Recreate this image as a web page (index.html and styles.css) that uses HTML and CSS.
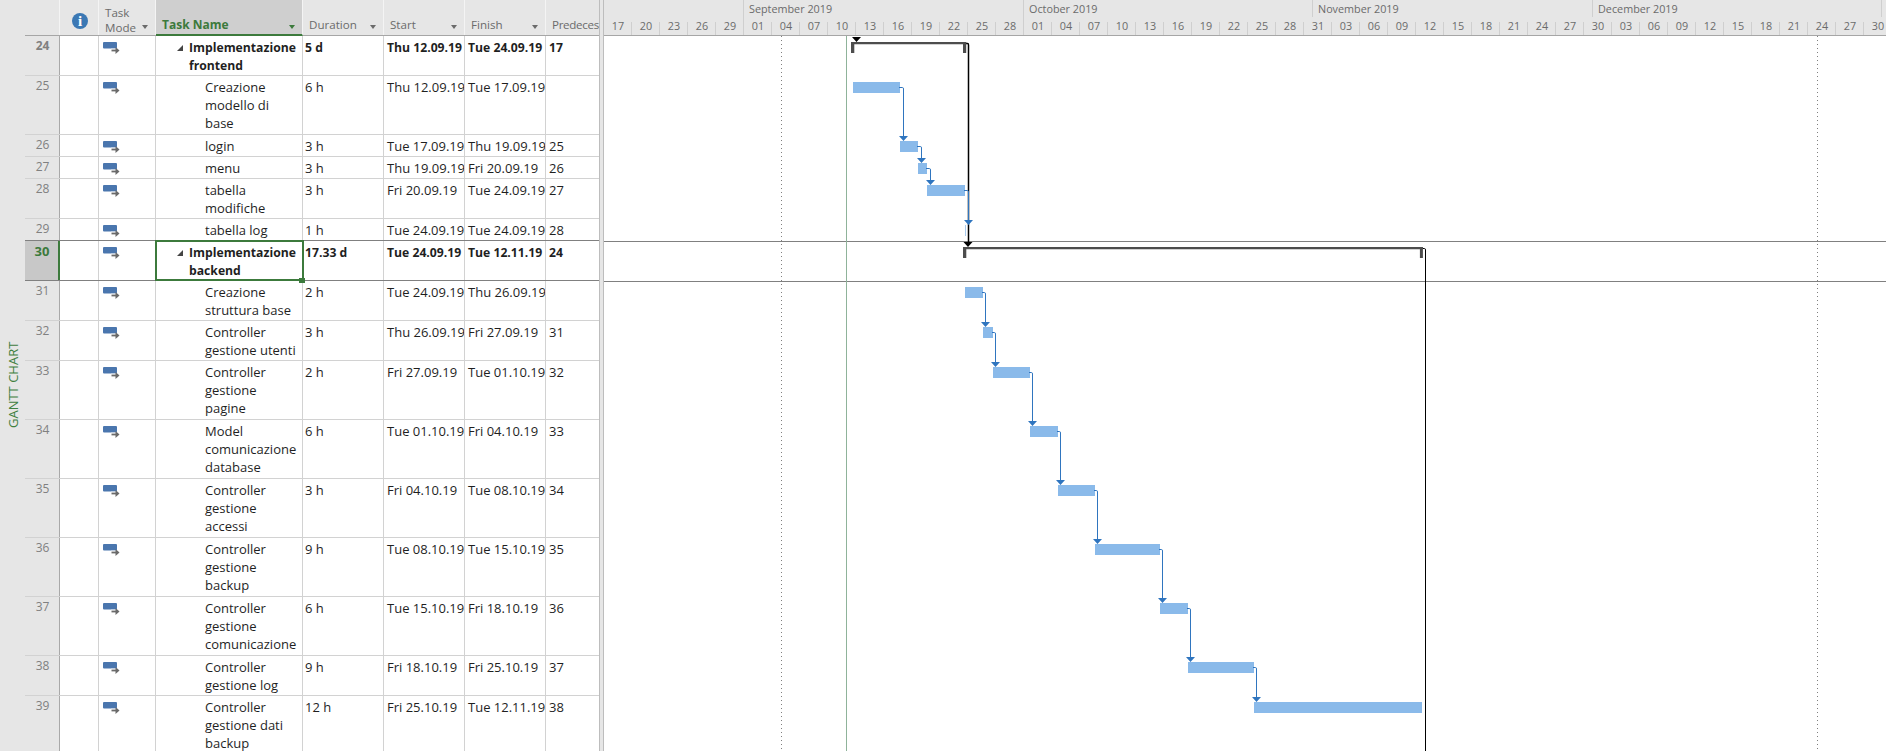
FILE: index.html
```html
<!DOCTYPE html>
<html lang="en">
<head>
    <meta charset="utf-8">
    <title>Gantt Chart</title>
    <link rel="stylesheet" href="styles.css">
</head>
<body>
    <svg width="0" height="0" class="defs">
        <symbol id="mode" viewBox="0 0 17 12">
            <rect x="0" y="0" width="14" height="6.5" rx="1" fill="#4a76ae"/>
            <path d="M8 8.5h5.5" stroke="white" stroke-width="3.6" fill="none"/>
            <path d="M8.5 8.5h5" stroke="#6a6a6a" stroke-width="1.8" fill="none"/>
            <path d="M12.5 5l4 3.5-4 3.5z" fill="#6a6a6a"/>
        </symbol>
    </svg>

    <div class="view-label"><span>GANTT CHART</span></div>

    <div class="sheet">
        <!-- Header -->
        <div class="row head">
            <div class="num"></div>
            <div class="c-info"><span class="info-icon">i</span></div>
            <div class="c-mode"><span>Task<br>Mode</span><i class="drop"></i></div>
            <div class="c-name active"><span>Task Name</span><i class="drop"></i></div>
            <div class="c-dur"><span>Duration</span><i class="drop"></i></div>
            <div class="c-date"><span>Start</span><i class="drop"></i></div>
            <div class="c-date"><span>Finish</span><i class="drop"></i></div>
            <div class="c-pred"><span>Predeces</span></div>
        </div>

        <!-- Tasks -->
        <div class="row h2 summary">
            <div class="num">24</div><div class="c-info"></div>
            <div class="c-mode"><svg class="mode"><use href="#mode"/></svg></div>
            <div class="c-name"><i class="twist"></i>Implementazione frontend</div>
            <div class="c-dur">5 d</div><div class="c-date">Thu 12.09.19</div><div class="c-date">Tue 24.09.19</div><div class="c-pred">17</div>
        </div>
        <div class="row h3">
            <div class="num">25</div><div class="c-info"></div>
            <div class="c-mode"><svg class="mode"><use href="#mode"/></svg></div>
            <div class="c-name">Creazione modello di<br>base</div>
            <div class="c-dur">6 h</div><div class="c-date">Thu 12.09.19</div><div class="c-date">Tue 17.09.19</div><div class="c-pred"></div>
        </div>
        <div class="row h1">
            <div class="num">26</div><div class="c-info"></div>
            <div class="c-mode"><svg class="mode"><use href="#mode"/></svg></div>
            <div class="c-name">login</div>
            <div class="c-dur">3 h</div><div class="c-date">Tue 17.09.19</div><div class="c-date">Thu 19.09.19</div><div class="c-pred">25</div>
        </div>
        <div class="row h1">
            <div class="num">27</div><div class="c-info"></div>
            <div class="c-mode"><svg class="mode"><use href="#mode"/></svg></div>
            <div class="c-name">menu</div>
            <div class="c-dur">3 h</div><div class="c-date">Thu 19.09.19</div><div class="c-date">Fri 20.09.19</div><div class="c-pred">26</div>
        </div>
        <div class="row h2">
            <div class="num">28</div><div class="c-info"></div>
            <div class="c-mode"><svg class="mode"><use href="#mode"/></svg></div>
            <div class="c-name">tabella modifiche</div>
            <div class="c-dur">3 h</div><div class="c-date">Fri 20.09.19</div><div class="c-date">Tue 24.09.19</div><div class="c-pred">27</div>
        </div>
        <div class="row h1 before-selected">
            <div class="num">29</div><div class="c-info"></div>
            <div class="c-mode"><svg class="mode"><use href="#mode"/></svg></div>
            <div class="c-name">tabella log</div>
            <div class="c-dur">1 h</div><div class="c-date">Tue 24.09.19</div><div class="c-date">Tue 24.09.19</div><div class="c-pred">28</div>
        </div>
        <div class="row h2 summary selected">
            <div class="num">30</div><div class="c-info"></div>
            <div class="c-mode"><svg class="mode"><use href="#mode"/></svg></div>
            <div class="c-name"><i class="twist"></i>Implementazione backend<i class="handle"></i></div>
            <div class="c-dur">17.33 d</div><div class="c-date">Tue 24.09.19</div><div class="c-date">Tue 12.11.19</div><div class="c-pred">24</div>
        </div>
        <div class="row h2">
            <div class="num">31</div><div class="c-info"></div>
            <div class="c-mode"><svg class="mode"><use href="#mode"/></svg></div>
            <div class="c-name">Creazione struttura base</div>
            <div class="c-dur">2 h</div><div class="c-date">Tue 24.09.19</div><div class="c-date">Thu 26.09.19</div><div class="c-pred"></div>
        </div>
        <div class="row h2">
            <div class="num">32</div><div class="c-info"></div>
            <div class="c-mode"><svg class="mode"><use href="#mode"/></svg></div>
            <div class="c-name">Controller gestione utenti</div>
            <div class="c-dur">3 h</div><div class="c-date">Thu 26.09.19</div><div class="c-date">Fri 27.09.19</div><div class="c-pred">31</div>
        </div>
        <div class="row h3">
            <div class="num">33</div><div class="c-info"></div>
            <div class="c-mode"><svg class="mode"><use href="#mode"/></svg></div>
            <div class="c-name">Controller gestione<br>pagine</div>
            <div class="c-dur">2 h</div><div class="c-date">Fri 27.09.19</div><div class="c-date">Tue 01.10.19</div><div class="c-pred">32</div>
        </div>
        <div class="row h3">
            <div class="num">34</div><div class="c-info"></div>
            <div class="c-mode"><svg class="mode"><use href="#mode"/></svg></div>
            <div class="c-name">Model comunicazione database</div>
            <div class="c-dur">6 h</div><div class="c-date">Tue 01.10.19</div><div class="c-date">Fri 04.10.19</div><div class="c-pred">33</div>
        </div>
        <div class="row h3">
            <div class="num">35</div><div class="c-info"></div>
            <div class="c-mode"><svg class="mode"><use href="#mode"/></svg></div>
            <div class="c-name">Controller gestione<br>accessi</div>
            <div class="c-dur">3 h</div><div class="c-date">Fri 04.10.19</div><div class="c-date">Tue 08.10.19</div><div class="c-pred">34</div>
        </div>
        <div class="row h3">
            <div class="num">36</div><div class="c-info"></div>
            <div class="c-mode"><svg class="mode"><use href="#mode"/></svg></div>
            <div class="c-name">Controller gestione<br>backup</div>
            <div class="c-dur">9 h</div><div class="c-date">Tue 08.10.19</div><div class="c-date">Tue 15.10.19</div><div class="c-pred">35</div>
        </div>
        <div class="row h3">
            <div class="num">37</div><div class="c-info"></div>
            <div class="c-mode"><svg class="mode"><use href="#mode"/></svg></div>
            <div class="c-name">Controller gestione comunicazione</div>
            <div class="c-dur">6 h</div><div class="c-date">Tue 15.10.19</div><div class="c-date">Fri 18.10.19</div><div class="c-pred">36</div>
        </div>
        <div class="row h2">
            <div class="num">38</div><div class="c-info"></div>
            <div class="c-mode"><svg class="mode"><use href="#mode"/></svg></div>
            <div class="c-name">Controller gestione log</div>
            <div class="c-dur">9 h</div><div class="c-date">Fri 18.10.19</div><div class="c-date">Fri 25.10.19</div><div class="c-pred">37</div>
        </div>
        <div class="row h3">
            <div class="num">39</div><div class="c-info"></div>
            <div class="c-mode"><svg class="mode"><use href="#mode"/></svg></div>
            <div class="c-name">Controller gestione dati backup</div>
            <div class="c-dur">12 h</div><div class="c-date">Fri 25.10.19</div><div class="c-date">Tue 12.11.19</div><div class="c-pred">38</div>
        </div>
    </div>

    <div class="splitter"></div>

    <div class="gantt">
        <!-- Timescale -->
        <div class="timescale">
            <div class="months">
                <span class="m-lead"></span>
                <span class="m-sep">September 2019</span>
                <span class="m-oct">October 2019</span>
                <span class="m-nov">November 2019</span>
                <span class="m-dec">December 2019</span>
            </div>
            <div class="days">
                <span>17</span><span>20</span><span>23</span><span>26</span><span>29</span><span>01</span><span>04</span><span>07</span><span>10</span><span>13</span><span>16</span><span>19</span><span>22</span><span>25</span><span>28</span><span>01</span><span>04</span><span>07</span><span>10</span><span>13</span><span>16</span><span>19</span><span>22</span><span>25</span><span>28</span><span>31</span><span>03</span><span>06</span><span>09</span><span>12</span><span>15</span><span>18</span><span>21</span><span>24</span><span>27</span><span>30</span><span>03</span><span>06</span><span>09</span><span>12</span><span>15</span><span>18</span><span>21</span><span>24</span><span>27</span><span>30</span>
            </div>
        </div>

        <svg class="chart" viewBox="604 36 1282 715" width="1282" height="715">
            <path class="row-line" d="M604 241.5H1886M604 281.5H1886"/>
            <path class="today" d="M846.5 36V751"/>
            <path class="dotted" d="M781.5 36V751M1817.5 36V751"/>

            <path class="sum-link" d="M966 43.5h1.5q1 0 1 1.5V243"/>
            <path class="sum-link thin" d="M1423 248.5h1.5q1 0 1 1.5V751"/>

            <g class="summary-bar">
                <path d="M851 42h115.3v2.3h-.1v8.7h-3.2v-8.7h-108.7v8.7h-3.3z"/>
                <path d="M963 247h460v2.3h-.1v8.7h-3v-8.7h-453.6v8.7h-3.3z"/>
            </g>
            <path class="sum-arrow" d="M852 37h9l-4.5 5zM963.5 242h9l-4.5 5z"/>

            <g class="bars">
                <rect x="853" y="82" width="47" height="11"/>
                <rect x="900" y="141" width="18" height="11"/>
                <rect x="918" y="163" width="9" height="11"/>
                <rect x="927" y="185" width="38" height="11"/>
                <rect x="965" y="225" width="1" height="11" class="zero"/>
                <rect x="965" y="287" width="18" height="11"/>
                <rect x="983" y="327" width="10" height="11"/>
                <rect x="993" y="367" width="37" height="11"/>
                <rect x="1030" y="426" width="28" height="11"/>
                <rect x="1058" y="485" width="37" height="11"/>
                <rect x="1095" y="544" width="65" height="11"/>
                <rect x="1160" y="603" width="28" height="11"/>
                <rect x="1188" y="662" width="66" height="11"/>
                <rect x="1254" y="702" width="168" height="11"/>
            </g>

            <g class="links">
                <path d="M899 87.5h3.5q1 0 1 1.5V137"/>
                <path d="M917 146.5h3.5q1 0 1 1.5V159"/>
                <path d="M926 168.5h3.5q1 0 1 1.5V181"/>
                <path d="M964 190.5h3.5q1 0 1 1.5V221"/>
                <path d="M982 292.5h2.5q1 0 1 1.5V323"/>
                <path d="M992 332.5h2.5q1 0 1 1.5V363"/>
                <path d="M1029 372.5h2.5q1 0 1 1.5V422"/>
                <path d="M1057 431.5h2.5q1 0 1 1.5V481"/>
                <path d="M1094 490.5h2.5q1 0 1 1.5V540"/>
                <path d="M1159 549.5h2.5q1 0 1 1.5V599"/>
                <path d="M1187 608.5h2.5q1 0 1 1.5V658"/>
                <path d="M1253 667.5h2.5q1 0 1 1.5V698"/>
            </g>
            <path class="link-arrows" d="M899 136h9l-4.5 5zM917 158h9l-4.5 5zM926 180h9l-4.5 5zM964 220h9l-4.5 5zM981 322h9l-4.5 5zM991 362h9l-4.5 5zM1028 421h9l-4.5 5zM1056 480h9l-4.5 5zM1093 539h9l-4.5 5zM1158 598h9l-4.5 5zM1186 657h9l-4.5 5zM1252 697h9l-4.5 5z"/>
        </svg>
    </div>
</body>
</html>
```

FILE: styles.css
```css
html, body {
    margin: 0;
    height: 751px;
    overflow: hidden;
}
body {
    display: flex;
    background-color: white;
    color: #1f1f1f;
    font-family: 'Open Sans', sans-serif;
    font-size: 13px;
    line-height: 18px;
}
.defs {
    position: absolute;
}

/* View label on the far left */
.view-label {
    width: 25px;
    flex: none;
    background-color: #e6e6e6;
    display: flex;
    justify-content: center;
    align-items: flex-start;
}
.view-label span {
    margin-top: 340px;
    writing-mode: vertical-rl;
    transform: rotate(180deg);
    color: #3f8040;
    font-size: 13px;
    height: 88px;
    white-space: nowrap;
}

/* Sheet */
.sheet {
    width: 574px;
    flex: none;
}
.row {
    display: flex;
    border-bottom: 1px solid #d2d2d2;
    box-sizing: border-box;
}
.row > div {
    box-sizing: border-box;
    border-right: 1px solid #d2d2d2;
    padding: 2px 0 0 2px;
    overflow: hidden;
}
.h1 { height: 22px; }
.h2 { height: 40px; }
.h3 { height: 59px; }

.row .num {
    width: 35px;
    flex: none;
    background-color: #e6e6e6;
    border-right: 1px solid #a9a9a9;
    color: #808080;
    font-size: 12px;
    text-align: center;
    padding: 1px 0 0 1px;
}
.c-info { width: 39px; flex: none; }
.c-mode { width: 57px; flex: none; }
.c-name { width: 147px; flex: none; }
.c-dur { width: 81px; flex: none; }
.c-date { width: 81px; flex: none; white-space: nowrap; }
.c-pred { width: 53px; flex: none; border-right: none !important; }

.row > .c-date {
    padding-left: 3px;
}
.row > .c-pred {
    padding-left: 3px;
}
.row > .c-name {
    position: relative;
    padding-left: 49px;
    padding-right: 0;
}
.summary {
    font-weight: bold;
    font-size: 12.2px;
}
.row.summary > div {
    padding-top: 3px;
}
.row.summary > .c-name {
    padding-left: 33px;
}
.row.summary > .num {
    padding-top: 1px;
}
.row.summary > .c-mode, .row > .c-mode {
    padding: 0;
}
.mode {
    display: block;
    width: 17px;
    height: 12px;
    margin: 6px 0 0 4px;
}
.twist {
    position: absolute;
    left: 21px;
    top: 9px;
    border-style: solid;
    border-width: 0 0 6px 6px;
    border-color: transparent transparent #444 transparent;
}

/* Header */
.head {
    height: 36px;
    background-color: #e6e6e6;
    border-bottom: 1px solid #a6a6a6;
    color: #6b6b6b;
    font-size: 11.6px;
}
.row.head > div {
    position: relative;
    border-right: 1px solid #f4f4f4;
    white-space: nowrap;
    padding-top: 16px;
}
.row.head > .num {
    border-right: 1px solid #f4f4f4;
}
.row.head > .c-mode {
    padding: 5px 0 0 6px;
    line-height: 15px;
}
.row.head > .c-name {
    padding-left: 6px;
    background-color: #cfcfcf;
    color: #3c7a3c;
    font-weight: bold;
    font-size: 12px;
    border-bottom: 2px solid #3c7a3c;
    margin-bottom: -1px;
    height: 36px;
}
.row.head > .c-dur, .row.head > .c-date, .row.head > .c-pred {
    padding-left: 6px;
}
.row.head > .c-pred {
    letter-spacing: -0.3px;
}
.drop {
    position: absolute;
    right: 7px;
    top: 25px;
    border-style: solid;
    border-width: 4px 3.5px 0;
    border-color: #6b6b6b transparent transparent;
}
.c-name .drop {
    border-top-color: #3c7a3c;
}
.row.head > .c-info {
    padding: 13px 0 0 0;
}
.info-icon {
    display: block;
    width: 16px;
    height: 16px;
    margin-left: 12px;
    border-radius: 50%;
    background-color: #3b78b4;
    color: white;
    font-family: 'Liberation Serif', serif;
    font-weight: bold;
    font-size: 15px;
    line-height: 16px;
    text-align: center;
}

/* Selected row */
.before-selected {
    border-bottom-color: #808080;
}
.selected {
    border-bottom-color: #808080;
}
.row.selected .num {
    background-color: #c8c8c8;
    color: #3c7a3c;
    font-weight: bold;
    font-size: 13px;
    border-right: 2px solid #3c7a3c;
}
.row.selected > .c-name {
    outline: 2px solid #3c7a3c;
    outline-offset: -1px;
    overflow: visible;
    z-index: 2;
}
.handle {
    position: absolute;
    right: -3px;
    bottom: -3px;
    width: 6px;
    height: 5px;
    background-color: #3c7a3c;
}

.splitter {
    width: 5px;
    flex: none;
    background-color: #e6e6e6;
    border-left: 1px solid #bdbdbd;
    border-right: 1px solid #bdbdbd;
    box-sizing: border-box;
}

/* Gantt side */
.gantt {
    flex: 1;
    min-width: 0;
    overflow: hidden;
}
.timescale {
    height: 36px;
    box-sizing: border-box;
    background-color: #e6e6e6;
    border-bottom: 1px solid #a6a6a6;
    color: #6b6b6b;
    font-size: 10.8px;
    overflow: hidden;
}
.months {
    display: flex;
    height: 17px;
    white-space: nowrap;
}
.months span {
    flex: none;
    box-sizing: border-box;
    border-right: 1px solid #cfcfcf;
    padding-left: 5px;
    line-height: 18px;
}
.m-lead { width: 140px; padding: 0 !important; }
.m-sep { width: 280px; }
.m-oct { width: 289px; }
.m-nov { width: 280px; }
.m-dec { width: 289px; }
.days {
    display: flex;
    height: 18px;
}
.days span {
    flex: 0 0 28px;
    box-sizing: border-box;
    position: relative;
    text-align: center;
    line-height: 17px;
}
.days span::after {
    content: "";
    position: absolute;
    right: 0;
    bottom: 0;
    height: 13px;
    border-right: 1px solid #cfcfcf;
}
/* month boundaries run up into the month row */
.days span:nth-child(5)::after,
.days span:nth-child(15)::after {
    height: 18px;
}

.chart {
    display: block;
}
.chart path {
    fill: none;
}
.row-line {
    stroke: #808080;
}
.today {
    stroke: #8fb39a;
}
.dotted {
    stroke: #808080;
    stroke-dasharray: 1 3;
}
.sum-link {
    stroke: black;
    stroke-width: 1.5;
}
.sum-link.thin {
    stroke-width: 1;
}
.chart .summary-bar path {
    fill: #4d4d4d;
}
.chart .sum-arrow {
    fill: black;
}
.bars rect {
    fill: #8abaea;
}
.bars .zero {
    fill: #a9cbee;
}
.links path {
    stroke: #2f75bf;
}
.chart .link-arrows {
    fill: #2f75bf;
}
```
